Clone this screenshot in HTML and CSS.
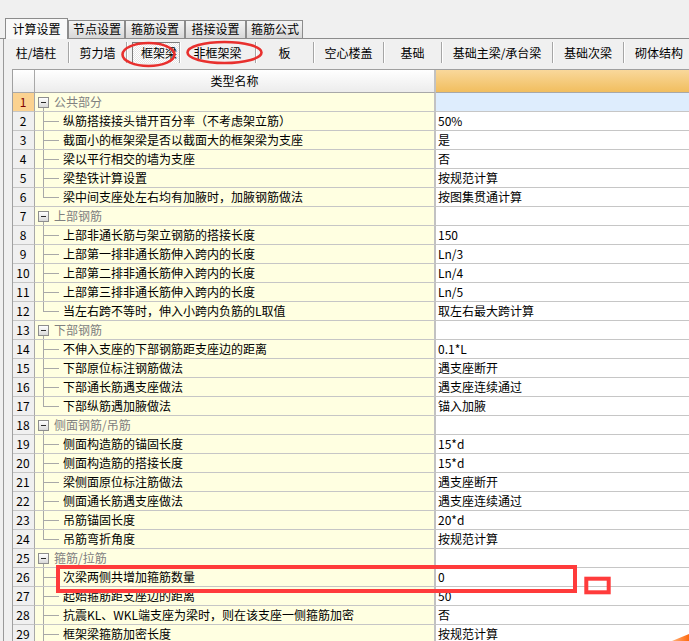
FILE: index.html
```html
<!DOCTYPE html>
<html lang="zh-CN">
<head>
<meta charset="utf-8">
<title>计算设置</title>
<link rel="stylesheet" href="styles.css">
</head>
<body>
<div class="tabs">
  <div class="tab active">计算设置</div>
  <div class="tab">节点设置</div>
  <div class="tab">箍筋设置</div>
  <div class="tab">搭接设置</div>
  <div class="tab">箍筋公式</div>
</div>
<div class="panel">
  <div class="toolbar">
    <div class="tb">柱/墙柱</div>
    <div class="tb">剪力墙</div>
    <div class="tb pressed">框架梁</div>
    <div class="tb">非框架梁</div>
    <div class="tb">板</div>
    <div class="tb">空心楼盖</div>
    <div class="tb">基础</div>
    <div class="tb">基础主梁/承台梁</div>
    <div class="tb">基础次梁</div>
    <div class="tb">砌体结构</div>
  </div>
  <div class="grid">
    <div class="row head"><div class="num"></div><div class="name">类型名称</div><div class="val"></div></div>
    <div class="row group sel"><div class="num">1</div><div class="name"><span class="box"></span>公共部分</div><div class="val"></div></div>
    <div class="row child"><div class="num">2</div><div class="name">纵筋搭接接头错开百分率（不考虑架立筋）</div><div class="val">50%</div></div>
    <div class="row child"><div class="num">3</div><div class="name">截面小的框架梁是否以截面大的框架梁为支座</div><div class="val">是</div></div>
    <div class="row child"><div class="num">4</div><div class="name">梁以平行相交的墙为支座</div><div class="val">否</div></div>
    <div class="row child"><div class="num">5</div><div class="name">梁垫铁计算设置</div><div class="val">按规范计算</div></div>
    <div class="row child last"><div class="num">6</div><div class="name">梁中间支座处左右均有加腋时，加腋钢筋做法</div><div class="val">按图集贯通计算</div></div>
    <div class="row group"><div class="num">7</div><div class="name"><span class="box"></span>上部钢筋</div><div class="val"></div></div>
    <div class="row child"><div class="num">8</div><div class="name">上部非通长筋与架立钢筋的搭接长度</div><div class="val">150</div></div>
    <div class="row child"><div class="num">9</div><div class="name">上部第一排非通长筋伸入跨内的长度</div><div class="val">Ln/3</div></div>
    <div class="row child"><div class="num">10</div><div class="name">上部第二排非通长筋伸入跨内的长度</div><div class="val">Ln/4</div></div>
    <div class="row child"><div class="num">11</div><div class="name">上部第三排非通长筋伸入跨内的长度</div><div class="val">Ln/5</div></div>
    <div class="row child last"><div class="num">12</div><div class="name">当左右跨不等时，伸入小跨内负筋的L取值</div><div class="val">取左右最大跨计算</div></div>
    <div class="row group"><div class="num">13</div><div class="name"><span class="box"></span>下部钢筋</div><div class="val"></div></div>
    <div class="row child"><div class="num">14</div><div class="name">不伸入支座的下部钢筋距支座边的距离</div><div class="val">0.1*L</div></div>
    <div class="row child"><div class="num">15</div><div class="name">下部原位标注钢筋做法</div><div class="val">遇支座断开</div></div>
    <div class="row child"><div class="num">16</div><div class="name">下部通长筋遇支座做法</div><div class="val">遇支座连续通过</div></div>
    <div class="row child last"><div class="num">17</div><div class="name">下部纵筋遇加腋做法</div><div class="val">锚入加腋</div></div>
    <div class="row group"><div class="num">18</div><div class="name"><span class="box"></span>侧面钢筋/吊筋</div><div class="val"></div></div>
    <div class="row child"><div class="num">19</div><div class="name">侧面构造筋的锚固长度</div><div class="val">15*d</div></div>
    <div class="row child"><div class="num">20</div><div class="name">侧面构造筋的搭接长度</div><div class="val">15*d</div></div>
    <div class="row child"><div class="num">21</div><div class="name">梁侧面原位标注筋做法</div><div class="val">遇支座断开</div></div>
    <div class="row child"><div class="num">22</div><div class="name">侧面通长筋遇支座做法</div><div class="val">遇支座连续通过</div></div>
    <div class="row child"><div class="num">23</div><div class="name">吊筋锚固长度</div><div class="val">20*d</div></div>
    <div class="row child last"><div class="num">24</div><div class="name">吊筋弯折角度</div><div class="val">按规范计算</div></div>
    <div class="row group"><div class="num">25</div><div class="name"><span class="box"></span>箍筋/拉筋</div><div class="val"></div></div>
    <div class="row child"><div class="num">26</div><div class="name">次梁两侧共增加箍筋数量</div><div class="val">0</div></div>
    <div class="row child"><div class="num">27</div><div class="name">起始箍筋距支座边的距离</div><div class="val">50</div></div>
    <div class="row child"><div class="num">28</div><div class="name">抗震KL、WKL端支座为梁时，则在该支座一侧箍筋加密</div><div class="val">否</div></div>
    <div class="row child"><div class="num">29</div><div class="name">框架梁箍筋加密长度</div><div class="val">按规范计算</div></div>
  </div>
</div>
<svg class="marks" width="689" height="641" viewBox="0 0 689 641">
  <defs>
    <linearGradient id="og" x1="0" y1="0" x2="1" y2="0">
      <stop offset="0" stop-color="#ffb27a"/>
      <stop offset="1" stop-color="#ff6a10"/>
    </linearGradient>
  </defs>
  <ellipse cx="148.5" cy="54.5" rx="26" ry="11.5" fill="none" stroke="#e8302e" stroke-width="2.6"/>
  <ellipse cx="224.5" cy="52.5" rx="37" ry="10.5" fill="none" stroke="#e8302e" stroke-width="2.6"/>
  <rect x="58" y="567" width="517" height="24" fill="none" stroke="#ff3b3b" stroke-width="4"/>
  <rect x="586.3" y="578.7" width="22.4" height="13.6" fill="none" stroke="#ff3b3b" stroke-width="4"/>
  <polygon points="672,641 689,634 689,641" fill="url(#og)"/>
</svg>
</body>
</html>
```
FILE: styles.css
```css
* { box-sizing: border-box; }
html, body { margin: 0; padding: 0; }
body {
  width: 689px;
  height: 641px;
  overflow: hidden;
  position: relative;
  background: #f0f0f0;
  font-family: "Noto Sans CJK SC", "Noto Sans", sans-serif;
  font-size: 12px;
  color: #000;
}

/* tab strip */
.tabs {
  display: flex;
  align-items: flex-end;
  height: 39px;
  padding-left: 5px;
  border-bottom: 1px solid #8c8c8c;
}
.tab {
  height: 18px;
  line-height: 16px;
  padding: 0 4px;
  width: 58px;
  text-align: center;
  border: 1px solid #8c8c8c;
  border-bottom: none;
  background: linear-gradient(#f4f4f4, #d8d8d8);
  white-space: nowrap;
}
.tab.active {
  height: 21px;
  width: 63px;
  line-height: 20px;
  margin-bottom: -1px;
  background: #f9f9f9;
}
.tab:nth-child(2) { width: 57px; }
.tab:nth-child(3) { width: 60px; }
.tab:nth-child(4) { width: 61px; }
.tab:nth-child(5) { width: 57px; }

/* panel */
.panel {
  border-left: 1px solid #9a9a9a;
  margin-left: 3px;
}
.toolbar {
  display: flex;
  height: 30px;
  padding-top: 3px;
  padding-left: 0;
  white-space: nowrap;
}
.tb {
  height: 21px;
  line-height: 21px;
  text-align: center;
  border-right: 1px solid #a6a6a6;
  box-shadow: 1px 0 0 #ffffff;
  flex: none;
}
.tb:nth-child(1) { width: 65px; }
.tb:nth-child(2) { width: 58px; }
.tb:nth-child(3) { width: 48px; margin-left: 5px; }
.tb:nth-child(4) { width: 76px; }
.tb:nth-child(5) { width: 58px; }
.tb:nth-child(6) { width: 70px; }
.tb:nth-child(7) { width: 58px; }
.tb:nth-child(8) { width: 111px; }
.tb:nth-child(9) { width: 71px; }
.tb:nth-child(10) { width: 70px; border-right: none; box-shadow: none; }
.tb.pressed {
  border-top: 1px solid #7c7c7c;
  border-left: 1px solid #7c7c7c;
  line-height: 19px;
  padding-left: 6px;
  background-color: #f6f6f6;
  background-image: repeating-conic-gradient(#ffffff 0 25%, #e6e6e6 0 50%);
  background-size: 2px 2px;
}

/* grid */
.grid {
  margin-left: 8px;
  border-top: 1px solid #a0a0a0;
  border-left: 1px solid #a0a0a0;
}
.row {
  display: grid;
  grid-template-columns: 22px 401px 1fr;
  height: 19px;
  line-height: 18px;
}
.row > div {
  border-bottom: 1px solid #c6c6c6;
  white-space: nowrap;
  overflow: hidden;
}
.num {
  background: #f0f0f0;
  border-right: 1px solid #a8a8a8;
  text-align: center;
  padding-right: 1px;
}
.name {
  position: relative;
  background: #ffffe1;
  border-right: 2px solid #c2c2c2;
  padding-left: 28px;
}
.val {
  background: #ffffff;
  padding-left: 2px;
}

.row.head {
  height: 23px;
  line-height: 22px;
}
.row.head > div {
  border-bottom: 1px solid #a8a8a8;
}
.row.head .num,
.row.head .name {
  background: linear-gradient(#ffffff, #ececec);
  text-align: center;
  padding-left: 0;
}
.row.head .val {
  background: linear-gradient(#f9d89b, #f1be5f);
}

.row.sel .num {
  background: #fbd290;
  color: #800000;
}
.row.sel .val {
  background: #deedfd;
}

.group .name {
  padding-left: 3px;
  color: #808080;
  display: flex;
  align-items: center;
}
.box {
  position: relative;
  width: 11px;
  height: 11px;
  margin-right: 5px;
  border: 1px solid #8e8e8e;
  background: linear-gradient(#ffffff, #d9d9d9);
  flex: none;
}
.box::after {
  content: "";
  position: absolute;
  left: 2px;
  top: 4px;
  width: 5px;
  height: 1px;
  background: #2a2a2a;
}
.group .name::before {
  content: "";
  position: absolute;
  left: 8px;
  top: 14px;
  bottom: -1px;
  width: 1px;
  background: #a8a8a8;
}
.child .name::before {
  content: "";
  position: absolute;
  left: 8px;
  top: -1px;
  bottom: -1px;
  width: 1px;
  background: #a8a8a8;
}
.child.last .name::before {
  bottom: 9px;
}
.child .name::after {
  content: "";
  position: absolute;
  left: 8px;
  top: 9px;
  width: 16px;
  height: 1px;
  background: #a8a8a8;
}

.marks {
  position: absolute;
  left: 0;
  top: 0;
  pointer-events: none;
}
```
